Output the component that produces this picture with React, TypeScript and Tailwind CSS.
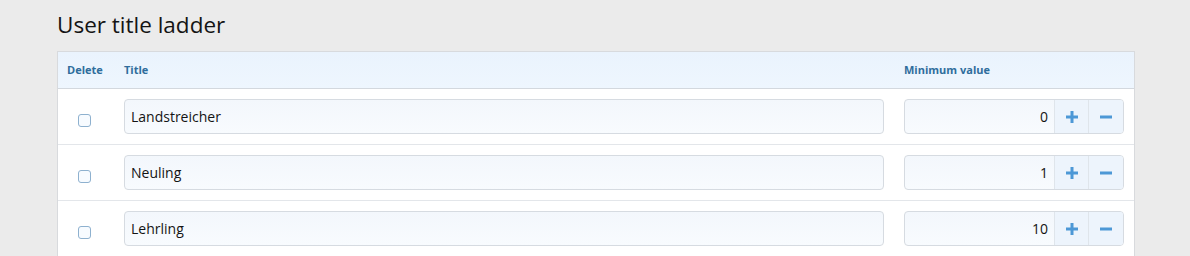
import React from "react";

const rows = [
  { title: "Landstreicher", value: 0 },
  { title: "Neuling", value: 1 },
  { title: "Lehrling", value: 10 },
];

function Checkbox() {
  return <span className="mt-[8px] block h-[13px] w-[13px] rounded-[3px] border border-[#8eb1cf] bg-[#f7fbff]" />;
}

function NumberBox({ value }: { value: number }) {
  return (
    <div className="flex h-[35px] w-full overflow-hidden rounded-[4px] border border-[#d6dbe1] bg-gradient-to-b from-[#f3f7fc] to-[#f8fbfe]">
      <div className="flex flex-1 items-center justify-end pr-[6px] text-[14px] text-[#141414]">{value}</div>
      <button className="flex w-[34px] items-center justify-center border-l border-[#dfe5eb] bg-[#edf4fc]">
        <svg width="12" height="12" viewBox="0 0 12 12">
          <rect x="4.5" y="0" width="3" height="12" fill="#4d98d6" />
          <rect x="0" y="4.5" width="12" height="3" fill="#4d98d6" />
        </svg>
      </button>
      <button className="flex w-[35px] items-center justify-center border-l border-[#dfe5eb] bg-[#edf4fc]">
        <svg width="12" height="12" viewBox="0 0 12 12">
          <rect x="0" y="4.5" width="12" height="3" fill="#4d98d6" />
        </svg>
      </button>
    </div>
  );
}

export default function App() {
  return (
    <div className="min-h-[256px] bg-[#ebebeb] pl-[57px] pr-[55px] font-['Open_Sans',sans-serif]">
      <h1 className="pt-[9px] pb-[11px] text-[22.5px] leading-[31px] text-[#141414]">User title ladder</h1>
      <div className="border border-[#d8dadd] bg-white">
        <div className="grid h-[37px] grid-cols-[56px_1fr_240px] items-center border-b border-[#d3d8de] bg-gradient-to-b from-[#eaf3fd] to-[#eef6fe] text-[11px] font-bold text-[#2f6d9c]">
          <div className="pl-[9px]">Delete</div>
          <div className="pl-[10px]">Title</div>
          <div className="pl-[10px]">Minimum value</div>
        </div>
        {rows.map((r, i) => (
          <div
            key={r.title}
            className={`grid grid-cols-[56px_1fr_240px] items-center py-[10px] ${i < rows.length - 1 ? "border-b border-[#e3e6ea]" : ""}`}
          >
            <div className="flex justify-start pl-[20px]">
              <Checkbox />
            </div>
            <div className="px-[10px]">
              <div className="flex h-[35px] items-center rounded-[4px] border border-[#d6dbe1] bg-gradient-to-b from-[#f3f7fc] to-[#f8fbfe] pl-[6px] text-[14px] text-[#141414]">
                {r.title}
              </div>
            </div>
            <div className="pl-[10px] pr-[10px]">
              <NumberBox value={r.value} />
            </div>
          </div>
        ))}
      </div>
    </div>
  );
}
